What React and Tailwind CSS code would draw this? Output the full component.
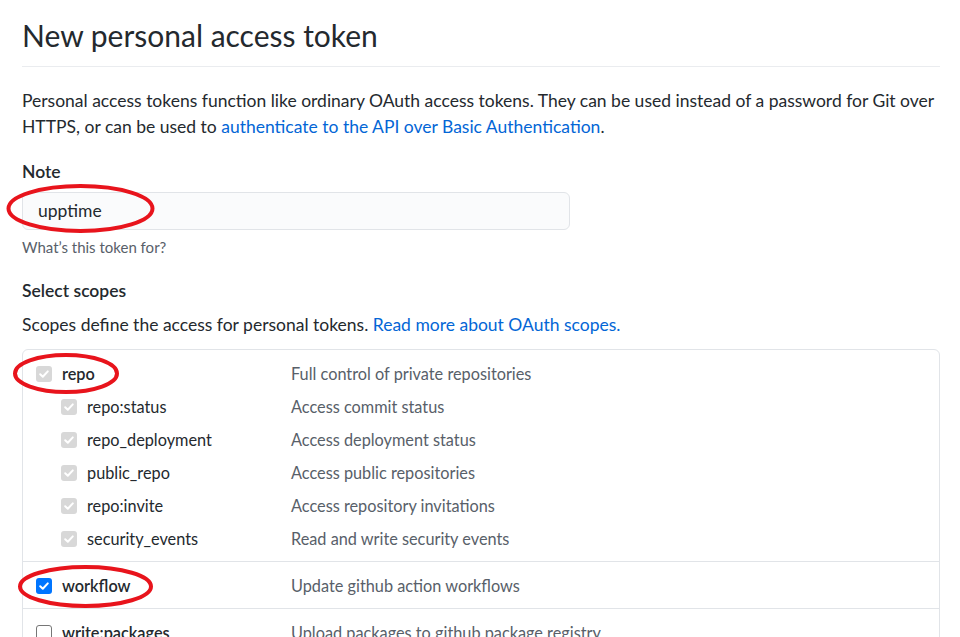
import React from 'react';

const FONT = { fontFamily: 'Lato, "Noto Sans", sans-serif' };

function Check({ state }) {
  // state: 'disabled' | 'checked' | 'empty'
  if (state === 'empty') {
    return <span className="inline-block w-[16px] h-[16px] rounded-[3px] border border-[#767676] bg-white shrink-0" />;
  }
  const bg = state === 'checked' ? 'bg-[#0075ff]' : 'bg-[#d8d8d8]';
  return (
    <span className={`inline-flex items-center justify-center w-[16px] h-[16px] rounded-[3px] shrink-0 ${bg}`}>
      <svg width="12" height="12" viewBox="0 0 12 12" fill="none">
        <path d="M2.2 6.3 L4.8 8.8 L9.8 3.4" stroke="white" strokeWidth="2" strokeLinecap="round" strokeLinejoin="round" />
      </svg>
    </span>
  );
}

function Row({ name, desc, state, sub, bold }) {
  return (
    <div className="flex items-center h-[33px] text-[16.3px]">
      <div className={`flex items-center w-[268px] ${sub ? 'pl-[38px]' : 'pl-[13px]'}`}>
        <Check state={state} />
        <span className={`ml-[10px] ${bold ? 'font-semibold' : ''} text-[#24292e]`}>{name}</span>
      </div>
      <span className="text-[#586069]">{desc}</span>
    </div>
  );
}

export default function App() {
  return (
    <div className="relative w-[960px] h-[637px] overflow-hidden bg-white text-[17.5px] leading-[26px] text-[#24292e]" style={FONT}>
      <div className="ml-[22px] w-[918px]">
        <div className="pt-[16px] pb-[12px] border-b border-[#eaecef]">
          <h1 className="text-[30px] leading-[38px] font-normal">New personal access token</h1>
        </div>

        <p className="mt-[21px]">
          Personal access tokens function like ordinary OAuth access tokens. They can be used instead of a password for Git over HTTPS, or can be used to{' '}
          <a className="text-[#0366d6]">authenticate to the API over Basic Authentication</a>.
        </p>

        <div className="mt-[19px] font-semibold">Note</div>
        <div className="mt-[7px] w-[548px] h-[38px] rounded-[6px] border border-[#e1e4e8] bg-[#fafbfc] flex items-center pl-[15px]">
          upptime
        </div>
        <div className="mt-[7px] text-[15px] leading-[20px] text-[#586069]">What’s this token for?</div>

        <div className="mt-[21px] font-semibold">Select scopes</div>
        <p className="mt-[8px]">
          Scopes define the access for personal tokens. <a className="text-[#0366d6]">Read more about OAuth scopes.</a>
        </p>

        <div className="mt-[11px] border border-[#e1e4e8] rounded-t-[6px]">
          <div className="pt-[7px] pb-[6px] border-b border-[#e1e4e8]">
            <Row name="repo" desc="Full control of private repositories" state="disabled" bold />
            <Row name="repo:status" desc="Access commit status" state="disabled" sub />
            <Row name="repo_deployment" desc="Access deployment status" state="disabled" sub />
            <Row name="public_repo" desc="Access public repositories" state="disabled" sub />
            <Row name="repo:invite" desc="Access repository invitations" state="disabled" sub />
            <Row name="security_events" desc="Read and write security events" state="disabled" sub />
          </div>
          <div className="pt-[7px] pb-[6px] border-b border-[#e1e4e8]">
            <Row name="workflow" desc="Update github action workflows" state="checked" bold />
          </div>
          <div className="pt-[7px] pb-[6px]">
            <Row name="write:packages" desc="Upload packages to github package registry" state="empty" bold />
          </div>
        </div>
      </div>

      {/* red annotation ellipses */}
      <svg className="absolute left-0 top-0 pointer-events-none" width="960" height="637">
        <ellipse cx="80.5" cy="208.5" rx="72" ry="22.5" fill="none" stroke="#e8141c" strokeWidth="4" />
        <ellipse cx="66" cy="373.5" rx="51" ry="18.5" fill="none" stroke="#e8141c" strokeWidth="4" />
        <ellipse cx="85.5" cy="586.5" rx="65.5" ry="19.5" fill="none" stroke="#e8141c" strokeWidth="4" />
      </svg>
    </div>
  );
}
